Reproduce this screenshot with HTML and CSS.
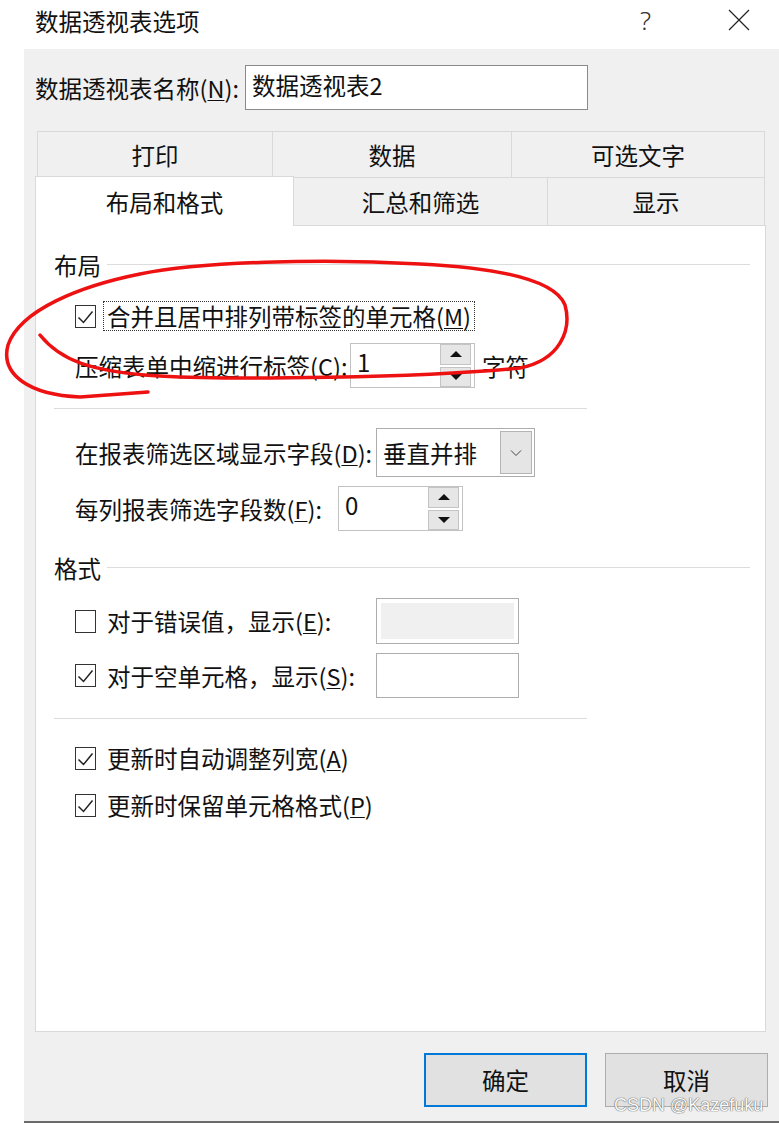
FILE: index.html
```html
<!DOCTYPE html>
<html lang="zh-CN">
<head>
<meta charset="utf-8">
<title>数据透视表选项</title>
<link rel="stylesheet" href="styles.css">
</head>
<body>
<div class="dialog">
  <div class="titlebar">
    <span class="title">数据透视表选项</span>
    <span class="help">?</span>
    <span class="close"><svg width="22" height="22" viewBox="0 0 22 22"><path d="M1 1 L21 21 M21 1 L1 21" stroke="#222" stroke-width="1.2" fill="none"/></svg></span>
  </div>
  <div class="main">
    <div class="name-row">
      <span class="name-label">数据透视表名称(<u>N</u>):</span>
      <div class="name-input">数据透视表2</div>
    </div>
    <div class="tabs">
      <div class="tab-row row1">
        <div class="tab w1">打印</div>
        <div class="tab w2">数据</div>
        <div class="tab w3">可选文字</div>
      </div>
      <div class="tab-row row2">
        <div class="tab selected">布局和格式</div>
        <div class="tab w5">汇总和筛选</div>
        <div class="tab w6">显示</div>
      </div>
    </div>
    <div class="panel">
      <div class="group-head h1"><span>布局</span><span class="rule"></span></div>
      <div class="row cb-row r-merge">
        <span class="cb checked"><svg width="21" height="23" viewBox="0 0 21 23"><path d="M3.5 12.5 L8.5 17.5 L17.5 6.5" stroke="#222" stroke-width="1.5" fill="none"/></svg></span>
        <span class="cb-text focus">合并且居中排列带标签的单元格(<u>M</u>)</span>
      </div>
      <div class="row r-indent">
        <span class="lbl w-indent">压缩表单中缩进行标签(<u>C</u>):</span>
        <div class="spin">
          <span class="spin-val">1</span>
          <span class="spin-btns">
            <span class="sbtn up"><i class="tri-up"></i></span>
            <span class="sbtn down"><i class="tri-down"></i></span>
          </span>
        </div>
        <span class="unit">字符</span>
      </div>
      <div class="sep s1"></div>
      <div class="row r-combo">
        <span class="lbl w-combo">在报表筛选区域显示字段(<u>D</u>):</span>
        <div class="combo">
          <span class="combo-val">垂直并排</span>
          <span class="combo-btn"><svg width="12" height="8" viewBox="0 0 12 8"><path d="M1 1.5 L6 6.5 L11 1.5" stroke="#444" stroke-width="1" fill="none"/></svg></span>
        </div>
      </div>
      <div class="row r-count">
        <span class="lbl w-count">每列报表筛选字段数(<u>F</u>):</span>
        <div class="spin">
          <span class="spin-val">0</span>
          <span class="spin-btns">
            <span class="sbtn up"><i class="tri-up"></i></span>
            <span class="sbtn down"><i class="tri-down"></i></span>
          </span>
        </div>
      </div>
      <div class="group-head h2"><span>格式</span><span class="rule"></span></div>
      <div class="row r-err">
        <div class="cb-group">
          <span class="cb"></span>
          <span class="cb-text">对于错误值，显示(<u>E</u>):</span>
        </div>
        <div class="field disabled"><span class="field-inner"></span></div>
      </div>
      <div class="row r-empty">
        <div class="cb-group">
          <span class="cb checked"><svg width="21" height="23" viewBox="0 0 21 23"><path d="M3.5 12.5 L8.5 17.5 L17.5 6.5" stroke="#222" stroke-width="1.5" fill="none"/></svg></span>
          <span class="cb-text">对于空单元格，显示(<u>S</u>):</span>
        </div>
        <div class="field"></div>
      </div>
      <div class="sep s2"></div>
      <div class="row cb-row r-auto">
        <span class="cb checked"><svg width="21" height="23" viewBox="0 0 21 23"><path d="M3.5 12.5 L8.5 17.5 L17.5 6.5" stroke="#222" stroke-width="1.5" fill="none"/></svg></span>
        <span class="cb-text">更新时自动调整列宽(<u>A</u>)</span>
      </div>
      <div class="row cb-row r-keep">
        <span class="cb checked"><svg width="21" height="23" viewBox="0 0 21 23"><path d="M3.5 12.5 L8.5 17.5 L17.5 6.5" stroke="#222" stroke-width="1.5" fill="none"/></svg></span>
        <span class="cb-text">更新时保留单元格格式(<u>P</u>)</span>
      </div>
    </div>
    <div class="buttons">
      <div class="btn default">确定</div>
      <div class="btn">取消</div>
    </div>
  </div>
  <svg class="annot" width="779" height="420" viewBox="0 0 779 420">
    <path d="M40 335 C60 360 90 372 160 376 S420 378 520 368 C560 360 572 330 565 305 C555 280 500 268 420 264 C320 258 200 262 140 274 C80 286 20 310 8 345 C0 375 30 395 80 397 L148 392" stroke="#ee1111" stroke-width="3.5" fill="none" stroke-linecap="round" stroke-linejoin="round"/>
  </svg>
  <div class="watermark">CSDN @Kazefuku</div>
</div>
</body>
</html>
```
FILE: styles.css
```css
* { box-sizing: border-box; }
html, body { margin: 0; padding: 0; }
body {
  width: 779px;
  height: 1125px;
  overflow: hidden;
  background: #fff;
  font-family: "Noto Sans CJK SC", "Microsoft YaHei", sans-serif;
  font-size: 23.5px;
  color: #111;
}
u { text-decoration: underline; text-underline-offset: 2px; text-decoration-thickness: 1px; }

.dialog { position: relative; width: 779px; height: 1125px; }

.titlebar {
  height: 49px;
  display: flex;
  align-items: flex-start;
  padding-left: 35px;
  padding-top: 6px;
}
.title { flex: 1; line-height: 30px; }
.help {
  width: 14px;
  margin-right: 74px;
  line-height: 30px;
  font-family: "Noto Sans", "DejaVu Sans", sans-serif;
  font-weight: 300;
  font-size: 26px;
  color: #333;
  margin-top: -1px;
}
.close { width: 22px; margin-right: 29px; margin-top: 3px; display: flex; }

.main {
  margin-left: 24px;
  height: 1074px;
  background: #f0f0f0;
  border-bottom: 2px solid #6a6a6a;
  display: flex;
  flex-direction: column;
}

.name-row {
  margin-top: 16px;
  padding-left: 11px;
  height: 45px;
  display: flex;
  align-items: center;
}
.name-label { flex: 0 0 210px; line-height: 30px; }
.name-input {
  width: 343px;
  height: 45px;
  background: #fff;
  border: 1px solid #8a8a8a;
  padding-left: 6px;
  line-height: 38px;
}

.tabs { margin-top: 21px; margin-left: 13px; width: 728px; }
.tab-row { display: flex; }
.row1 { height: 46px; }
.row2 { height: 48px; margin-left: -2px; align-items: flex-start; }
.tab {
  display: flex;
  align-items: center;
  justify-content: center;
  border-top: 1px solid #d9d9d9;
  border-right: 1px solid #d9d9d9;
  height: 100%;
  line-height: 30px;
}
.row1 .tab.w1 { width: 236px; border-left: 1px solid #d9d9d9; }
.row1 .tab.w2 { width: 239px; }
.row1 .tab.w3 { width: 253px; }
.row2 .tab { height: 48px; }
.row2 .tab.selected {
  width: 259px;
  height: 50px;
  margin-top: -1px;
  background: #fff;
  border-left: 1px solid #d9d9d9;
  position: relative;
  z-index: 1;
}
.row2 .tab.w5 { width: 254px; }
.row2 .tab.w6 { width: 217px; }

.panel {
  margin-left: 11px;
  width: 731px;
  height: 807px;
  background: #fff;
  border: 1px solid #d9d9d9;
  padding-left: 18px;
  padding-right: 15px;
  display: flex;
  flex-direction: column;
}

.group-head { display: flex; align-items: center; height: 30px; line-height: 30px; }
.group-head .rule { flex: 1; height: 1px; background: #dcdcdc; margin-left: 6px; margin-top: -1px; }
.h1 { margin-top: 24px; }
.h2 { margin-top: 22px; }

.row { display: flex; align-items: center; padding-left: 21px; line-height: 30px; }
.cb-row { height: 30px; }
.r-merge { margin-top: 21px; }
.r-indent { margin-top: 12px; height: 45px; }
.r-combo { margin-top: 19px; height: 49px; }
.r-count { margin-top: 9px; height: 45px; }
.r-err { margin-top: 15px; height: 46px; }
.r-empty { margin-top: 9px; height: 45px; }
.r-auto { margin-top: 24px; }
.r-keep { margin-top: 17px; }

.cb {
  flex: 0 0 21px;
  width: 21px;
  height: 23px;
  border: 1px solid #333;
  background: #fff;
  display: flex;
  align-items: center;
  justify-content: center;
}
.cb svg { display: block; margin: -1px; }
.cb-text {
  margin-left: 7px;
  padding: 0 3px;
  border: 1px solid transparent;
  height: 30px;
  line-height: 28px;
  white-space: nowrap;
}
.cb-text.focus { border: 1px dotted #333; }
.cb-group { flex: 0 0 301px; display: flex; align-items: center; }

.lbl { white-space: nowrap; }
.w-indent { flex: 0 0 275px; }
.w-combo { flex: 0 0 301px; }
.w-count { flex: 0 0 263px; }

.sep { height: 1px; background: #dcdcdc; width: 533px; }
.s1 { margin-top: 20px; }
.s2 { margin-top: 20px; }

.spin {
  position: relative;
  width: 125px;
  height: 45px;
  border: 1px solid #c2c2c2;
  background: #fff;
  display: flex;
  justify-content: space-between;
}
.spin-val { padding-left: 6px; line-height: 36px; font-size: 24px; }
.spin-btns {
  display: flex;
  flex-direction: column;
  gap: 2px;
  margin-right: 3px;
  width: 31px;
}
.sbtn {
  flex: 1;
  background: #e6e6e6;
  border: 1px solid #c4c4c4;
  display: flex;
  align-items: center;
  justify-content: center;
}
.tri-up, .tri-down { width: 0; height: 0; border-left: 6px solid transparent; border-right: 6px solid transparent; }
.tri-up { border-bottom: 6px solid #111; }
.tri-down { border-top: 6px solid #111; }
.unit { margin-left: 7px; }

.combo {
  width: 159px;
  height: 49px;
  border: 1px solid #adadad;
  background: #fff;
  display: flex;
  align-items: center;
  justify-content: space-between;
  padding: 2px 2px 2px 6px;
}
.combo-val { line-height: 30px; }
.combo-btn {
  width: 32px;
  height: 100%;
  background: #e5e5e5;
  border: 1px solid #b4b4b4;
  display: flex;
  align-items: center;
  justify-content: center;
}

.field {
  width: 143px;
  height: 100%;
  border: 1px solid #adadad;
  background: #fff;
  padding: 4px;
}
.field-inner { display: block; width: 100%; height: 100%; background: #f0f0f0; }

.buttons {
  margin-top: 21px;
  display: flex;
  justify-content: flex-end;
  gap: 18px;
  padding-right: 11px;
}
.btn {
  width: 163px;
  height: 54px;
  background: #e1e1e1;
  border: 1px solid #adadad;
  display: flex;
  align-items: center;
  justify-content: center;
  line-height: 30px;
}
.btn.default { border: 2px solid #0078d7; }

.annot { position: absolute; left: 0; top: 0; pointer-events: none; }
.watermark {
  position: absolute;
  left: 614px;
  top: 1094px;
  font-family: "Liberation Sans", Arial, sans-serif;
  font-size: 18px;
  color: #fafafa;
  text-shadow: 0 0 1px #555, 0 0 1px #555;
  line-height: 22px;
}
```
